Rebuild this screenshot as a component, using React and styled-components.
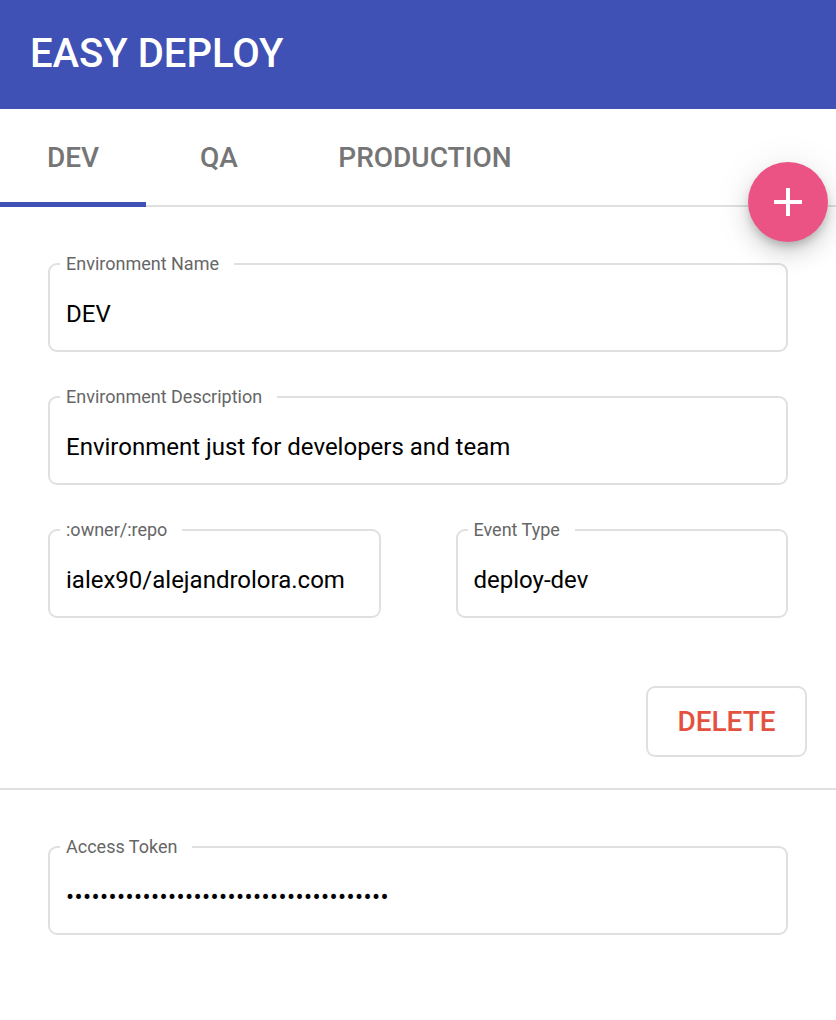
import React from "react";
import styled, { createGlobalStyle } from "styled-components";

const Global = createGlobalStyle`
  html, body { margin: 0; padding: 0; background: #fff; }
  body { font-family: Roboto, "Noto Sans", Arial, sans-serif; }
  * { box-sizing: border-box; }
`;

const Page = styled.div`
  position: relative;
  width: 836px;
  min-height: 1020px;
  background: #fff;
`;

const Header = styled.header`
  height: 109px;
  background: #3f51b5;
  display: flex;
  align-items: center;
  padding-left: 30px;
`;

const Title = styled.h1`
  margin: 0;
  color: #fff;
  font-family: Roboto, sans-serif;
  font-weight: 500;
  font-size: 40px;
  letter-spacing: 0;
  padding-bottom: 2px;
`;

const TabBar = styled.nav`
  display: flex;
  height: 98px;
  border-bottom: 2px solid #e0e0e0;
`;

const Tab = styled.button`
  position: relative;
  width: ${(p) => p.$w}px;
  height: 100%;
  border: 0;
  background: none;
  padding: 0;
  font-family: Roboto, sans-serif;
  font-weight: 500;
  font-size: 28px;
  color: #757575;
  text-transform: uppercase;
  display: flex;
  align-items: center;
  justify-content: center;
  &::after {
    content: "";
    position: absolute;
    left: 0;
    right: 0;
    bottom: -2px;
    height: 5px;
    background: ${(p) => (p.$active ? "#3f51b5" : "transparent")};
  }
`;

const Fab = styled.button`
  position: absolute;
  top: 162px;
  right: 8px;
  width: 80px;
  height: 80px;
  border-radius: 50%;
  border: 0;
  background: #ec5385;
  box-shadow: 0 6px 10px -2px rgba(0, 0, 0, 0.22), 0 12px 20px 2px rgba(0, 0, 0, 0.1),
    0 4px 36px 6px rgba(0, 0, 0, 0.06);
  display: flex;
  align-items: center;
  justify-content: center;
  padding: 0;
`;

const Section = styled.section`
  padding: 48px 48px 0;
  display: flex;
  flex-direction: column;
`;

const Row = styled.div`
  display: flex;
  gap: 75px;
  margin-top: ${(p) => p.$mt || 0}px;
`;

const Field = styled.fieldset`
  flex: 1;
  min-width: 0;
  margin: 0;
  margin-top: ${(p) => p.$mt || 0}px;
  border: 2px solid #e0e0e0;
  border-radius: 9px;
  padding: 0 16px 21px 16px;
`;

const Legend = styled.legend`
  margin-left: -6px;
  padding: 0 15px 0 6px;
  font-family: Roboto, sans-serif;
  font-size: 18px;
  line-height: 18px;
  color: #666;
`;

const Input = styled.input`
  display: block;
  width: 100%;
  border: 0;
  outline: none;
  padding: 0;
  margin-top: 26px;
  height: 30px;
  line-height: 30px;
  font-family: Roboto, sans-serif;
  font-size: 24px;
  color: #000;
  background: transparent;
  letter-spacing: ${(p) => (p.type === "password" ? "0.4px" : "0")};
`;

const Actions = styled.div`
  display: flex;
  justify-content: flex-end;
  padding: 68px 29px 31px 0;
  border-bottom: 2px solid #e0e0e0;
`;

const DeleteButton = styled.button`
  width: 161px;
  height: 71px;
  border: 2px solid #e0e0e0;
  border-radius: 9px;
  background: #fff;
  font-family: Roboto, sans-serif;
  font-weight: 500;
  font-size: 28px;
  color: #e4523f;
  text-transform: uppercase;
  padding: 0;
`;

const TextField = ({ label, value, type = "text", mt }) => (
  <Field $mt={mt}>
    <Legend>{label}</Legend>
    <Input type={type} defaultValue={value} readOnly />
  </Field>
);

export default function App() {
  return (
    <Page>
      <Global />
      <Header>
        <Title>EASY DEPLOY</Title>
      </Header>
      <TabBar>
        <Tab $w={146} $active>DEV</Tab>
        <Tab $w={146}>QA</Tab>
        <Tab $w={266}>PRODUCTION</Tab>
      </TabBar>
      <Fab aria-label="add">
        <svg width="28" height="28" viewBox="0 0 28 28">
          <path d="M14 0v28M0 14h28" stroke="#fff" strokeWidth="4" />
        </svg>
      </Fab>
      <Section>
        <TextField label="Environment Name" value="DEV" />
        <TextField label="Environment Description" value="Environment just for developers and team" mt={36} />
        <Row $mt={36}>
          <TextField label=":owner/:repo" value="ialex90/alejandrolora.com" />
          <TextField label="Event Type" value="deploy-dev" />
        </Row>
      </Section>
      <Actions>
        <DeleteButton>Delete</DeleteButton>
      </Actions>
      <Section>
        <TextField label="Access Token" value={"x".repeat(38)} type="password" />
      </Section>
    </Page>
  );
}
